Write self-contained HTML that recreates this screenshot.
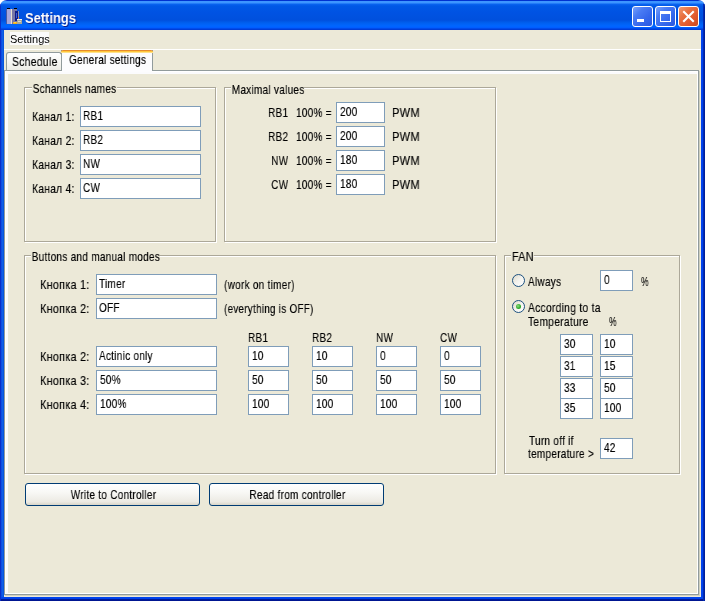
<!DOCTYPE html>
<html><head><meta charset="utf-8">
<style>
html,body{margin:0;padding:0;background:#fff;width:705px;height:601px;overflow:hidden}
*{box-sizing:border-box}
.a{position:absolute}
body{font-family:"Liberation Sans",sans-serif;color:#000;position:relative}
.t{font-size:13px;line-height:15px;white-space:nowrap;letter-spacing:0.35px;transform:scaleX(0.77);transform-origin:0 0;will-change:transform;-webkit-text-stroke:0.15px #000}
.tr{transform-origin:100% 0}
.tc{text-align:center;transform-origin:50% 0}
#win{left:0;top:0;width:705px;height:601px;border-radius:7px 7px 0 0;overflow:hidden;
 background:linear-gradient(90deg,#0019cf 0,#0831d9 1px,#166aee 2px,#0855dd 3px,#0855dd 4px,transparent 4px,transparent 701px,#0045f0 701px,#0040e8 703px,#001ea0 703px,#00138c 705px)}
#title{left:0;top:0;width:705px;height:30px;
 background:linear-gradient(180deg,#0032d0 0,#0032d0 1px,#3d95ff 1px,#3d95ff 3px,#0a64f0 4px,#0058e6 6px,#0053e3 12px,#0050dd 20px,#0060f0 23px,#0066ff 26px,#005bff 28px,#003dd7 29px,#003dd7 30px)}
#bottomframe{left:0;top:597px;width:705px;height:4px;background:linear-gradient(180deg,#0045f0 0,#0040e8 2px,#001ea0 2px,#00138c 4px)}
#client{left:4px;top:30px;width:697px;height:567px;background:#ece9d8}
.ttext{font-family:"Liberation Sans",sans-serif;font-weight:bold;font-size:14.5px;line-height:17px;white-space:nowrap;transform:scaleX(0.84);transform-origin:0 0;color:#fff;text-shadow:1px 1px 0 #0a1e8c;will-change:transform}
.tbtn{width:21px;height:21px;border:1px solid #fff;border-radius:3px;background:linear-gradient(135deg,#7aa2fb 0,#4a7cf4 30%,#3567ec 65%,#2a58e0 100%)}
.tb{background:#fff;border:1px solid #7f9db9;overflow:hidden}
.grp{border:1px solid #aca899;box-shadow:inset 1px 1px 0 #fff,1px 1px 0 #fff}
.gl{background:#ece9d8;padding:0 0 0 1px}
.btn{border:1px solid #003c74;border-radius:3px;background:linear-gradient(180deg,#fff 0,#f8f8f5 40%,#eceae3 85%,#d8d5c8 100%)}
.radio{width:13px;height:13px;border:1px solid #1c5180;border-radius:50%;background:linear-gradient(135deg,#dcd9c8 0,#f4f3ee 50%,#fff 100%)}
.dot{left:3px;top:3px;width:5px;height:5px;border-radius:50%;background:radial-gradient(circle at 40% 40%,#8cde7c 0,#2aa82a 60%,#1a8a1a 100%)}
.m{font-size:11px;line-height:13px;white-space:nowrap;will-change:transform}
</style></head><body>
<div id="win" class="a">
 <div id="title" class="a"></div>
 <div id="bottomframe" class="a"></div>
 <div id="client" class="a"></div>
 <div class="a" style="left:0;top:3px;width:1px;height:598px;background:#0a2fc8"></div>
 <div class="a" style="left:703px;top:4px;width:2px;height:597px;background:linear-gradient(90deg,#0030c0,#001a90)"></div>
</div>
<svg class="a" style="left:6px;top:8px" width="16" height="16" viewBox="0 0 16 16" shape-rendering="crispEdges">
 <rect x="0" y="1" width="1" height="15" fill="#4a5aa0"/>
 <rect x="1" y="1" width="4" height="15" fill="#a6a6dc"/>
 <rect x="5" y="1" width="1" height="15" fill="#e6e2d0"/>
 <rect x="1" y="0" width="3" height="1" fill="#000"/>
 <rect x="6" y="1" width="5" height="15" fill="#7676a6"/>
 <rect x="8" y="0" width="3" height="1" fill="#000"/>
 <rect x="9" y="3" width="3" height="10" fill="#0c1c88"/>
 <rect x="10" y="5" width="1" height="5" fill="#3a5ad0"/>
 <rect x="12" y="3" width="1" height="9" fill="#8890b0"/>
 <rect x="11" y="11" width="5" height="5" fill="#aaa898"/>
 <rect x="11" y="11" width="5" height="1" fill="#f4f4f0"/>
 <rect x="12" y="13" width="3" height="1" fill="#d8d8d0"/>
 <rect x="12" y="9" width="1" height="1" fill="#f08020"/>
 <rect x="7" y="14" width="4" height="2" fill="#f0b020"/>
 <rect x="8" y="14" width="2" height="1" fill="#ffd040"/>
</svg>
<div class="a ttext" style="left:25px;top:10px;transform:scaleX(0.89)">Settings</div>
<div class="a tbtn" style="left:632px;top:6px"><div class="a" style="left:4px;top:12px;width:7px;height:3px;background:#fff"></div></div>
<div class="a tbtn" style="left:655px;top:6px"><div class="a" style="left:4px;top:4px;width:11px;height:11px;border:1px solid #fff;border-top-width:3px"></div></div>
<div class="a tbtn" style="left:678px;top:6px;background:linear-gradient(135deg,#f09a70 0,#e8703f 35%,#e0582c 70%,#cc4a20 100%)">
 <svg class="a" style="left:0;top:0" width="19" height="19" viewBox="0 0 19 19"><path d="M5 5 L14 14 M14 5 L5 14" stroke="#fff" stroke-width="2.1" stroke-linecap="square"/></svg>
</div>
<div class="a" style="left:4px;top:49px;width:697px;height:1px;background:#fff"></div>
<div class="a" style="left:10px;top:32px;width:39px;height:13px;background:#fafafa"></div>
<div class="a m" style="left:10px;top:33px">Settings</div>
<div class="a" style="left:4px;top:70px;width:695px;height:525px;border:1px solid #919b9c;box-shadow:1px 1px 0 #d0d0bf">
 <div class="a" style="left:0;top:0;right:0;bottom:0;border:1px solid #fff"></div>
 <div class="a" style="left:1px;top:1px;right:1px;bottom:1px;border:2px solid #fbfbfd;border-right:none;border-bottom:none"></div>
</div>
<div class="a" style="left:6px;top:52px;width:56px;height:18px;border:1px solid #919b9c;border-bottom:none;border-radius:3px 3px 0 0;background:linear-gradient(180deg,#fff 0,#f7f7f4 50%,#ecebe5 100%)"></div>
<div class="a t" style="left:12px;top:54px;transform:scaleX(0.8)">Schedule</div>
<div class="a" style="left:61px;top:50px;width:92px;height:21px;border:1px solid #919b9c;border-top:none;border-bottom:none;background:#fcfcfe"></div>
<div class="a" style="left:62px;top:70px;width:90px;height:2px;background:#fcfcfe"></div>
<div class="a" style="left:61px;top:50px;width:92px;height:3px;border-radius:2px 2px 0 0;background:linear-gradient(180deg,#e68b2c 0,#e68b2c 1px,#ffc73c 1px,#ffc73c 2px,#ffe18a 2px)"></div>
<div class="a t" style="left:69px;top:52px">General settings</div>
<div class="a grp" style="left:24px;top:87px;width:192px;height:155px"></div>
<div class="a t gl" style="left:32px;top:81px;">Schannels names</div>
<div class="a t" style="left:32px;top:109px;transform:scaleX(0.79);">Канал 1:</div>
<div class="a tb" style="left:80px;top:106px;width:121px;height:21px"><div class="a t" style="left:2px;top:1px">RB1</div></div>
<div class="a t" style="left:32px;top:133px;transform:scaleX(0.79);">Канал 2:</div>
<div class="a tb" style="left:80px;top:130px;width:121px;height:21px"><div class="a t" style="left:2px;top:1px">RB2</div></div>
<div class="a t" style="left:32px;top:157px;transform:scaleX(0.79);">Канал 3:</div>
<div class="a tb" style="left:80px;top:154px;width:121px;height:21px"><div class="a t" style="left:2px;top:1px">NW</div></div>
<div class="a t" style="left:32px;top:181px;transform:scaleX(0.79);">Канал 4:</div>
<div class="a tb" style="left:80px;top:178px;width:121px;height:21px"><div class="a t" style="left:2px;top:1px">CW</div></div>
<div class="a grp" style="left:224px;top:87px;width:272px;height:155px"></div>
<div class="a t gl" style="left:231px;top:82px;">Maximal values</div>
<div class="a t tr" style="right:417px;top:105px">RB1</div>
<div class="a t" style="left:296px;top:105px;">100% =</div>
<div class="a tb" style="left:336px;top:102px;width:49px;height:21px"><div class="a t" style="left:3px;top:1px">200</div></div>
<div class="a t" style="left:392px;top:105px;transform:scaleX(0.85);">PWM</div>
<div class="a t tr" style="right:417px;top:129px">RB2</div>
<div class="a t" style="left:296px;top:129px;">100% =</div>
<div class="a tb" style="left:336px;top:126px;width:49px;height:21px"><div class="a t" style="left:3px;top:1px">200</div></div>
<div class="a t" style="left:392px;top:129px;transform:scaleX(0.85);">PWM</div>
<div class="a t tr" style="right:417px;top:153px">NW</div>
<div class="a t" style="left:296px;top:153px;">100% =</div>
<div class="a tb" style="left:336px;top:150px;width:49px;height:21px"><div class="a t" style="left:3px;top:1px">180</div></div>
<div class="a t" style="left:392px;top:153px;transform:scaleX(0.85);">PWM</div>
<div class="a t tr" style="right:417px;top:177px">CW</div>
<div class="a t" style="left:296px;top:177px;">100% =</div>
<div class="a tb" style="left:336px;top:174px;width:49px;height:21px"><div class="a t" style="left:3px;top:1px">180</div></div>
<div class="a t" style="left:392px;top:177px;transform:scaleX(0.85);">PWM</div>
<div class="a grp" style="left:24px;top:255px;width:472px;height:219px"></div>
<div class="a t gl" style="left:31px;top:249px;">Buttons and manual modes</div>
<div class="a t" style="left:40px;top:277px;transform:scaleX(0.83);">Кнопка 1:</div>
<div class="a tb" style="left:96px;top:274px;width:121px;height:21px"><div class="a t" style="left:2px;top:1px">Timer</div></div>
<div class="a t" style="left:40px;top:301px;transform:scaleX(0.83);">Кнопка 2:</div>
<div class="a tb" style="left:96px;top:298px;width:121px;height:21px"><div class="a t" style="left:2px;top:1px">OFF</div></div>
<div class="a t" style="left:40px;top:349px;transform:scaleX(0.83);">Кнопка 2:</div>
<div class="a tb" style="left:96px;top:346px;width:121px;height:21px"><div class="a t" style="left:2px;top:1px">Actinic only</div></div>
<div class="a t" style="left:40px;top:373px;transform:scaleX(0.83);">Кнопка 3:</div>
<div class="a tb" style="left:96px;top:370px;width:121px;height:21px"><div class="a t" style="left:3px;top:1px">50%</div></div>
<div class="a t" style="left:40px;top:397px;transform:scaleX(0.83);">Кнопка 4:</div>
<div class="a tb" style="left:96px;top:394px;width:121px;height:21px"><div class="a t" style="left:3px;top:1px">100%</div></div>
<div class="a t" style="left:224px;top:277px;">(work on timer)</div>
<div class="a t" style="left:224px;top:301px;transform:scaleX(0.76);">(everything is OFF)</div>
<div class="a t" style="left:248px;top:330px;">RB1</div>
<div class="a t" style="left:312px;top:330px;">RB2</div>
<div class="a t" style="left:376px;top:330px;">NW</div>
<div class="a t" style="left:440px;top:330px;">CW</div>
<div class="a tb" style="left:248px;top:346px;width:41px;height:21px"><div class="a t" style="left:3px;top:1px">10</div></div>
<div class="a tb" style="left:312px;top:346px;width:41px;height:21px"><div class="a t" style="left:3px;top:1px">10</div></div>
<div class="a tb" style="left:376px;top:346px;width:41px;height:21px"><div class="a t" style="left:3px;top:1px">0</div></div>
<div class="a tb" style="left:440px;top:346px;width:41px;height:21px"><div class="a t" style="left:3px;top:1px">0</div></div>
<div class="a tb" style="left:248px;top:370px;width:41px;height:21px"><div class="a t" style="left:3px;top:1px">50</div></div>
<div class="a tb" style="left:312px;top:370px;width:41px;height:21px"><div class="a t" style="left:3px;top:1px">50</div></div>
<div class="a tb" style="left:376px;top:370px;width:41px;height:21px"><div class="a t" style="left:3px;top:1px">50</div></div>
<div class="a tb" style="left:440px;top:370px;width:41px;height:21px"><div class="a t" style="left:3px;top:1px">50</div></div>
<div class="a tb" style="left:248px;top:394px;width:41px;height:21px"><div class="a t" style="left:3px;top:1px">100</div></div>
<div class="a tb" style="left:312px;top:394px;width:41px;height:21px"><div class="a t" style="left:3px;top:1px">100</div></div>
<div class="a tb" style="left:376px;top:394px;width:41px;height:21px"><div class="a t" style="left:3px;top:1px">100</div></div>
<div class="a tb" style="left:440px;top:394px;width:41px;height:21px"><div class="a t" style="left:3px;top:1px">100</div></div>
<div class="a grp" style="left:504px;top:255px;width:176px;height:219px"></div>
<div class="a t gl" style="left:511px;top:249px;transform:scaleX(0.84);">FAN</div>
<div class="a radio" style="left:512px;top:274px"></div>
<div class="a t" style="left:528px;top:274px;">Always</div>
<div class="a tb" style="left:600px;top:270px;width:33px;height:21px"><div class="a t" style="left:3px;top:1px">0</div></div>
<div class="a t" style="left:641px;top:274px;transform:scaleX(0.66);">%</div>
<div class="a radio" style="left:512px;top:300px"><div class="a dot"></div></div>
<div class="a t" style="left:528px;top:300px;transform:scaleX(0.79);">According to ta</div>
<div class="a t" style="left:528px;top:314px;transform:scaleX(0.79);">Temperature</div>
<div class="a t" style="left:609px;top:314px;transform:scaleX(0.66);">%</div>
<div class="a tb" style="left:560px;top:334px;width:33px;height:21px"><div class="a t" style="left:3px;top:1px">30</div></div>
<div class="a tb" style="left:600px;top:334px;width:33px;height:21px"><div class="a t" style="left:3px;top:1px">10</div></div>
<div class="a tb" style="left:560px;top:356px;width:33px;height:21px"><div class="a t" style="left:3px;top:1px">31</div></div>
<div class="a tb" style="left:600px;top:356px;width:33px;height:21px"><div class="a t" style="left:3px;top:1px">15</div></div>
<div class="a tb" style="left:560px;top:378px;width:33px;height:21px"><div class="a t" style="left:3px;top:1px">33</div></div>
<div class="a tb" style="left:600px;top:378px;width:33px;height:21px"><div class="a t" style="left:3px;top:1px">50</div></div>
<div class="a tb" style="left:560px;top:398px;width:33px;height:21px"><div class="a t" style="left:3px;top:1px">35</div></div>
<div class="a tb" style="left:600px;top:398px;width:33px;height:21px"><div class="a t" style="left:3px;top:1px">100</div></div>
<div class="a t" style="left:529px;top:433px;">Turn off if</div>
<div class="a t" style="left:528px;top:446px;">temperature &gt;</div>
<div class="a tb" style="left:600px;top:438px;width:33px;height:21px"><div class="a t" style="left:3px;top:1px">42</div></div>
<div class="a btn" style="left:25px;top:483px;width:175px;height:23px"><div class="a t tc" style="left:0;width:175px;top:3px">Write to Controller</div></div>
<div class="a btn" style="left:209px;top:483px;width:175px;height:23px"><div class="a t tc" style="left:0;width:175px;top:3px">Read from controller</div></div>
</body></html>
